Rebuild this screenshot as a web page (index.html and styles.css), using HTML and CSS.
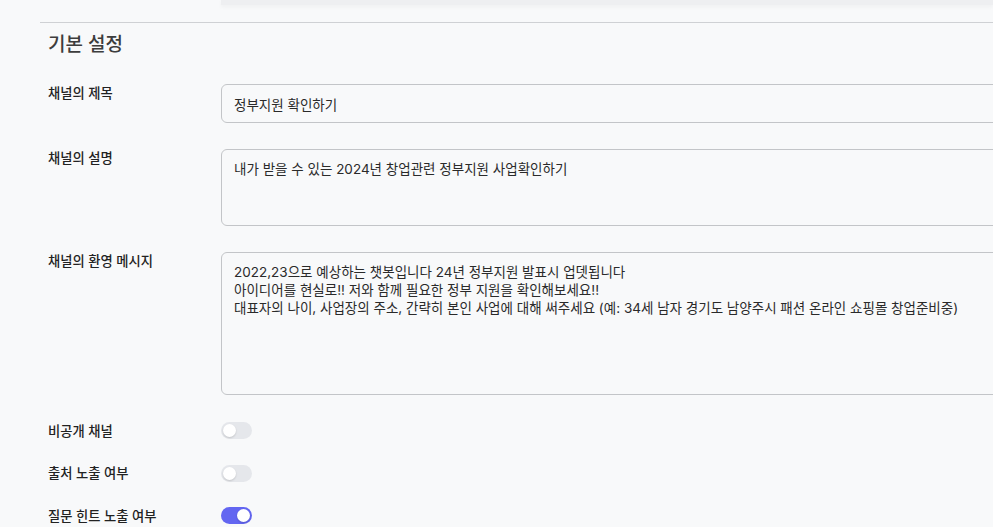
FILE: index.html
```html
<!DOCTYPE html>
<html lang="ko">
<head>
    <meta charset="UTF-8">
    <meta name="viewport" content="width=device-width, initial-scale=1.0">
    <title>채널 설정</title>
    <link rel="stylesheet" href="styles.css">
</head>
<body>

    <!-- bottom edge of the previous block -->
    <div class="prev-edge"></div>

    <!-- Basic settings -->
    <section class="settings">
        <h2 class="settings-title">기본 설정</h2>

        <div class="field-row">
            <label class="field-label" for="title">채널의 제목</label>
            <input class="field-input" id="title" type="text" value="정부지원 확인하기">
        </div>

        <div class="field-row">
            <label class="field-label" for="desc">채널의 설명</label>
            <textarea class="field-input field-desc" id="desc">내가 받을 수 있는 2024년 창업관련 정부지원 사업확인하기</textarea>
        </div>

        <div class="field-row field-row-last">
            <label class="field-label" for="welcome">채널의 환영 메시지</label>
            <textarea class="field-input field-welcome" id="welcome">2022,23으로 예상하는 챗봇입니다 24년 정부지원 발표시 업뎃됩니다
아이디어를 현실로!! 저와 함께 필요한 정부 지원을 확인해보세요!!
대표자의 나이, 사업장의 주소, 간략히 본인 사업에 대해 써주세요 (예: 34세 남자 경기도 남양주시 패션 온라인 쇼핑몰 창업준비중)</textarea>
        </div>

        <div class="toggle-row">
            <span class="field-label">비공개 채널</span>
            <span class="toggle"></span>
        </div>

        <div class="toggle-row">
            <span class="field-label">출처 노출 여부</span>
            <span class="toggle"></span>
        </div>

        <div class="toggle-row">
            <span class="field-label">질문 힌트 노출 여부</span>
            <span class="toggle on"></span>
        </div>
    </section>

</body>
</html>
```

FILE: styles.css
```css
/* Basic Reset */
* {
    margin: 0;
    padding: 0;
    box-sizing: border-box;
}

body {
    font-family: 'Inter', 'Noto Sans CJK KR', sans-serif;
    background: #f8f9fa;
    color: #222;
    overflow: hidden;
    height: 527px;
}

.prev-edge {
    margin-left: 221px;
    height: 5px;
    background: #eeeff1;
    box-shadow: 0 2px 4px rgba(0, 0, 0, 0.04);
}

/* Settings section */
.settings {
    margin: 17px 0 0 40px;
    border-top: 1px solid #cfd1d4;
    padding-left: 8px;
}

.settings-title {
    font-size: 19px;
    font-weight: 500;
    color: #3d3d3d;
    line-height: 24px;
    margin: 10px 0 27px;
}

.field-row {
    display: flex;
    align-items: flex-start;
    margin-bottom: 26px;
}

.field-row-last {
    margin-bottom: 27px;
}

.field-label {
    width: 173px;
    flex-shrink: 0;
    font-size: 13.3px;
    font-weight: 500;
    line-height: 18px;
    color: #222;
}

.field-input {
    width: 900px;
    flex-shrink: 0;
    font-family: inherit;
    font-size: 13.5px;
    line-height: 18px;
    color: #2a2a2a;
    background: #f8f9fa;
    border: 1px solid #c3c5c8;
    border-radius: 6px;
    padding: 10px 12px;
    resize: none;
    outline: none;
}

input.field-input {
    height: 39px;
}

.field-desc {
    height: 77px;
}

.field-welcome {
    height: 143px;
}

/* Toggles */
.toggle-row {
    display: flex;
    align-items: center;
    height: 17px;
    margin-bottom: 25.5px;
}

.toggle {
    position: relative;
    width: 31px;
    height: 17px;
    border-radius: 9px;
    background: #e5e7eb;
}

.toggle::after {
    content: '';
    position: absolute;
    top: 2px;
    left: 2px;
    width: 13px;
    height: 13px;
    border-radius: 50%;
    background: #fff;
    box-shadow: 0 1px 2px rgba(0, 0, 0, 0.15);
}

.toggle.on {
    background: #6366f1;
}

.toggle.on::after {
    left: 16px;
}
```
